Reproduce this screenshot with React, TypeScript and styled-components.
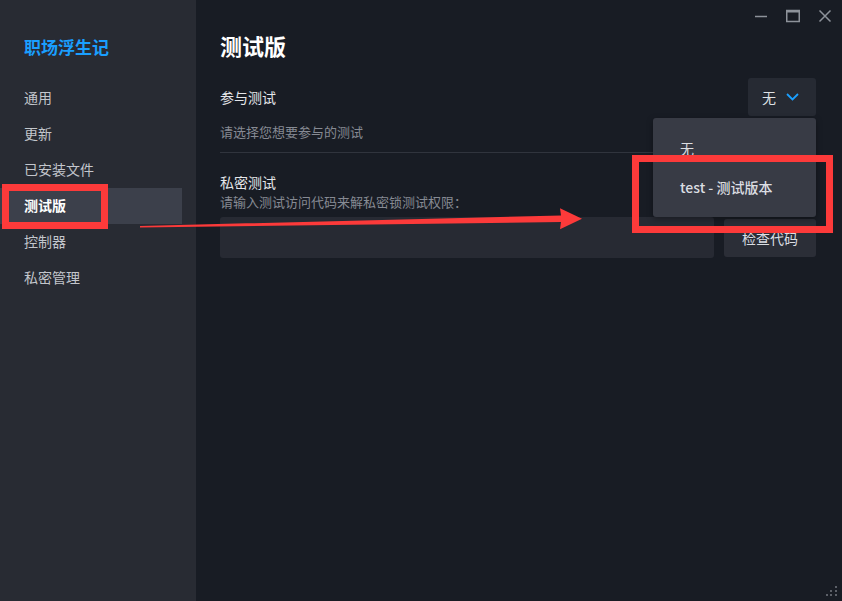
import React from "react";
import styled, { createGlobalStyle } from "styled-components";

const GlobalStyle = createGlobalStyle`
  html, body {
    margin: 0;
    padding: 0;
    background: #181c24;
  }
  body {
    font-family: "Noto Sans CJK SC", "Noto Sans", sans-serif;
  }
`;

const Window = styled.div`
  position: relative;
  display: flex;
  width: 842px;
  height: 601px;
  overflow: hidden;
  background: #181c24;
`;

const Sidebar = styled.aside`
  width: 196px;
  flex-shrink: 0;
  background: #282b33;
  padding-top: 35px;
  box-sizing: border-box;
`;

const AppName = styled.div`
  padding-left: 24px;
  font-size: 17px;
  line-height: 24px;
  font-weight: 700;
  color: #1a9fff;
  margin-bottom: 21px;
`;

const NavItem = styled.div<{ $active?: boolean }>`
  height: 36px;
  box-sizing: border-box;
  margin-right: 14px;
  padding: 0 0 2px 24px;
  display: flex;
  align-items: center;
  font-size: 14px;
  color: ${(p) => (p.$active ? "#ffffff" : "#c3c6cc")};
  font-weight: ${(p) => (p.$active ? 700 : 400)};
  background: ${(p) => (p.$active ? "#3c404b" : "transparent")};
`;

const Main = styled.main`
  flex: 1;
  display: flex;
  flex-direction: column;
`;

const TitleBar = styled.div`
  height: 31px;
  display: flex;
  justify-content: flex-end;
  align-items: center;
  gap: 18px;
  padding: 1px 10px 0 0;
  box-sizing: border-box;
`;

const Content = styled.div`
  padding: 0 26px 0 24px;
  display: flex;
  flex-direction: column;
`;

const Heading = styled.h1`
  margin: 0;
  font-size: 22px;
  line-height: 28px;
  font-weight: 700;
  color: #ffffff;
`;

const Row = styled.div`
  display: flex;
  align-items: center;
  justify-content: space-between;
  margin-top: 19px;
`;

const Label = styled.div<{ $top?: number }>`
  font-size: 14px;
  line-height: 20px;
  color: #e4e6ea;
  margin-top: ${(p) => p.$top ?? 0}px;
`;

const Hint = styled.div<{ $top?: number }>`
  font-size: 13px;
  line-height: 20px;
  color: #868a93;
  margin-top: ${(p) => p.$top ?? 0}px;
`;

const Divider = styled.div`
  height: 1px;
  background: #30343d;
  margin-top: 10px;
`;

const SelectWrap = styled.div`
  position: relative;
`;

const SelectBox = styled.div`
  width: 68px;
  height: 38px;
  box-sizing: border-box;
  border-radius: 3px;
  background: #262a33;
  display: flex;
  align-items: center;
  padding-left: 14px;
  gap: 10px;
  font-size: 14px;
  color: #dfe1e5;
`;

const Dropdown = styled.div`
  position: absolute;
  top: 40px;
  right: 0;
  width: 163px;
  padding: 10px 0 11px;
  border-radius: 3px;
  background: #383b45;
  box-shadow: 0 2px 6px rgba(0, 0, 0, 0.35);
  z-index: 2;
`;

const Option = styled.div<{ $hover?: boolean }>`
  height: 39px;
  display: flex;
  align-items: center;
  padding-left: 27px;
  font-size: 14px;
  color: #dcdee2;
  font-weight: ${(p) => (p.$hover ? 500 : 400)};
`;

const CodeRow = styled.div`
  display: flex;
  align-items: center;
  gap: 10px;
  margin-top: 5px;
`;

const CodeInput = styled.div`
  flex: 1;
  height: 41px;
  border-radius: 3px;
  background: #272a33;
`;

const CheckButton = styled.div`
  width: 92px;
  height: 38px;
  border-radius: 3px;
  background: #2b2e37;
  display: flex;
  align-items: center;
  justify-content: center;
  font-size: 14px;
  color: #dadde2;
`;

const Overlay = styled.svg`
  position: absolute;
  left: 0;
  top: 0;
  pointer-events: none;
  z-index: 5;
`;

const Grip = styled.svg`
  position: absolute;
  right: 4px;
  bottom: 4px;
`;

const ctl = "#8d929a";

export default function App() {
  const nav = ["通用", "更新", "已安装文件", "测试版", "控制器", "私密管理"];
  return (
    <>
      <GlobalStyle />
      <Window>
        <Sidebar>
          <AppName>职场浮生记</AppName>
          {nav.map((n) => (
            <NavItem key={n} $active={n === "测试版"}>
              {n}
            </NavItem>
          ))}
        </Sidebar>
        <Main>
          <TitleBar>
            <svg width="14" height="14" viewBox="0 0 14 14">
              <line x1="1" y1="7.5" x2="13" y2="7.5" stroke={ctl} strokeWidth="1.5" />
            </svg>
            <svg width="14" height="14" viewBox="0 0 14 14">
              <rect x="0.75" y="1.5" width="12.5" height="11" fill="none" stroke={ctl} strokeWidth="1.5" />
              <line x1="0.75" y1="2.5" x2="13.25" y2="2.5" stroke={ctl} strokeWidth="2" />
            </svg>
            <svg width="14" height="14" viewBox="0 0 14 14">
              <path d="M1.5 1.5 L12.5 12.5 M12.5 1.5 L1.5 12.5" stroke={ctl} strokeWidth="1.5" />
            </svg>
          </TitleBar>
          <Content>
            <Heading>测试版</Heading>
            <Row>
              <Label>参与测试</Label>
              <SelectWrap>
                <SelectBox>
                  无
                  <svg width="13" height="8" viewBox="0 0 13 8">
                    <path d="M1 1 L6.5 6.5 L12 1" fill="none" stroke="#1a9fff" strokeWidth="1.8" />
                  </svg>
                </SelectBox>
                <Dropdown>
                  <Option>无</Option>
                  <Option $hover>test - 测试版本</Option>
                </Dropdown>
              </SelectWrap>
            </Row>
            <Hint $top={6}>请选择您想要参与的测试</Hint>
            <Divider />
            <Label $top={19}>私密测试</Label>
            <Hint>请输入测试访问代码来解私密锁测试权限：</Hint>
            <CodeRow>
              <CodeInput />
              <CheckButton>检查代码</CheckButton>
            </CodeRow>
          </Content>
        </Main>
        <Grip width="12" height="12" viewBox="0 0 12 12">
          <rect x="9" y="1" width="2" height="2" fill="#5c6068" />
          <rect x="4" y="5" width="2" height="2" fill="#5c6068" />
          <rect x="9" y="5" width="2" height="2" fill="#5c6068" />
          <rect x="0" y="9" width="2" height="2" fill="#5c6068" />
          <rect x="4" y="9" width="2" height="2" fill="#5c6068" />
          <rect x="9" y="9" width="2" height="2" fill="#5c6068" />
        </Grip>
        <Overlay width="842" height="601" viewBox="0 0 842 601">
          <rect x="5.5" y="187.5" width="99" height="38" fill="none" stroke="#fc3a3a" strokeWidth="7" />
          <rect x="635.5" y="158.5" width="194" height="71" fill="none" stroke="#fc3a3a" strokeWidth="7" />
          <polygon
            points="140,226 561,215.5 560,208.3 582,218.8 560,229.3 561,222 140,227.6"
            fill="#fc3a3a"
          />
        </Overlay>
      </Window>
    </>
  );
}
